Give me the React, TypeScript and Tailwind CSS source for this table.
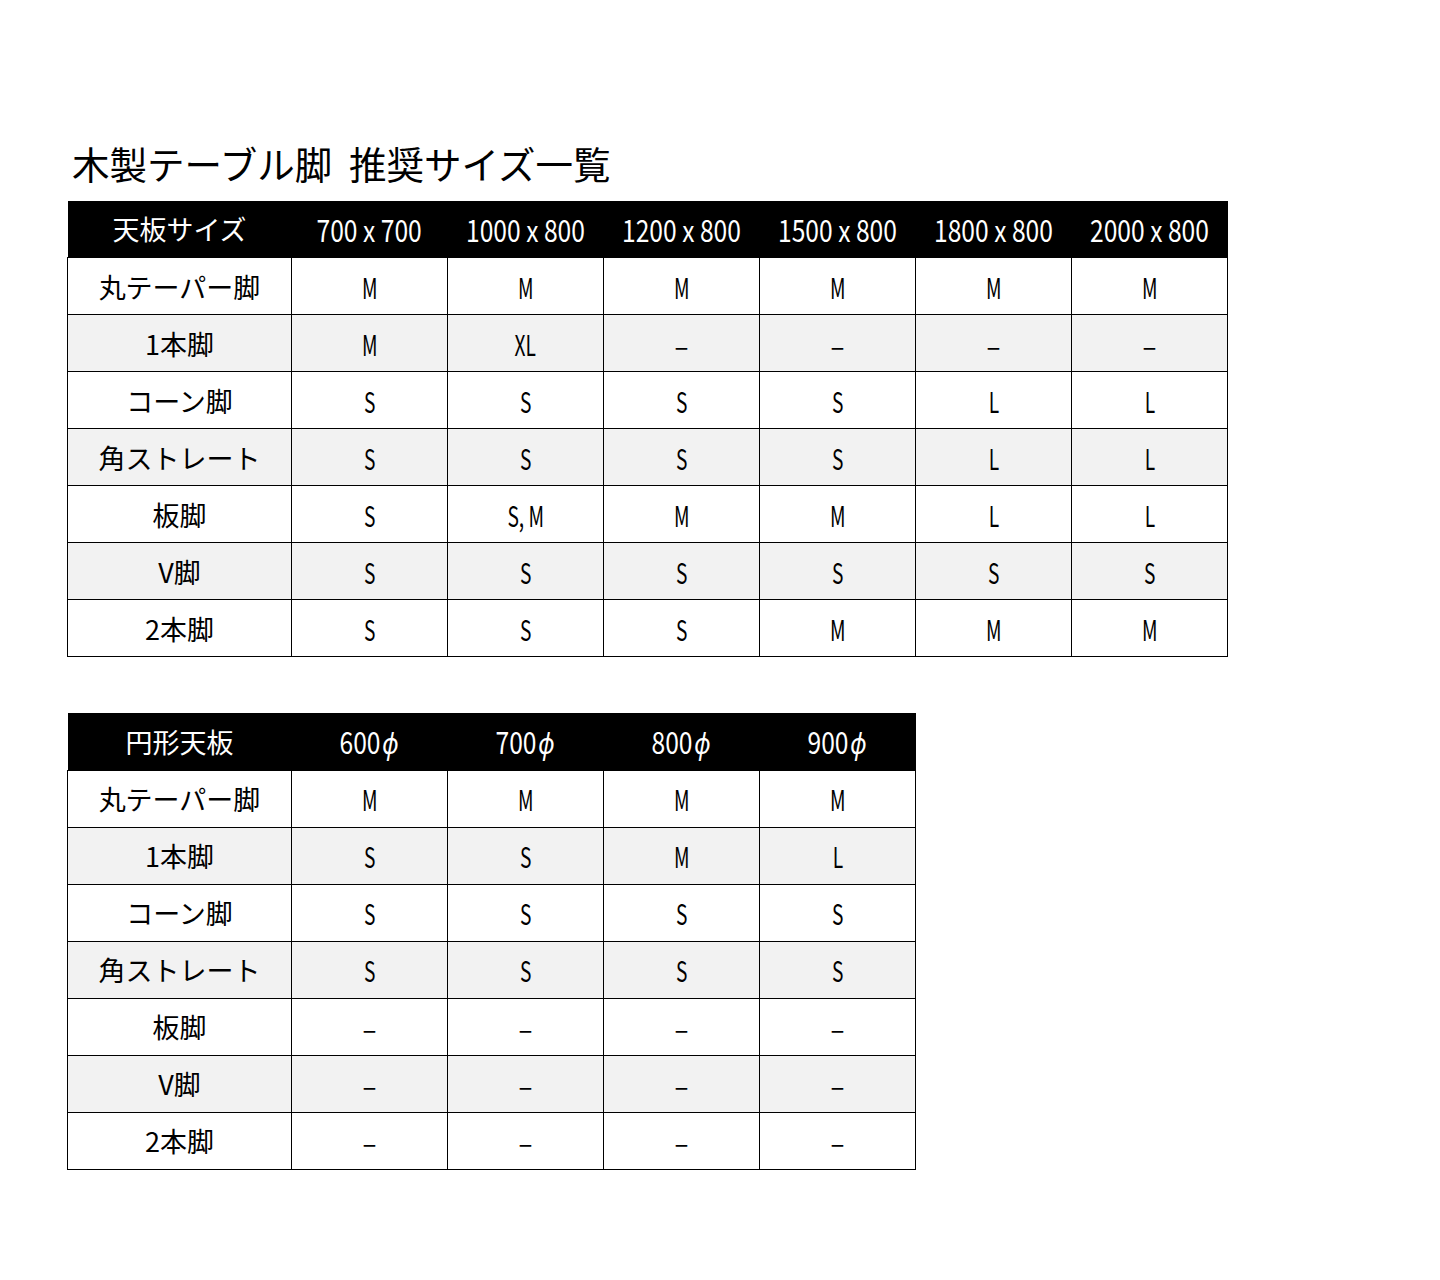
import React from 'react';

const font = {
  fontFamily: '"Noto Sans CJK JP", "Noto Sans", sans-serif',
};

const rectHeaders = ['700 x 700', '1000 x 800', '1200 x 800', '1500 x 800', '1800 x 800', '2000 x 800'];
const rectRows: [string, string[]][] = [
  ['丸テーパー脚', ['M', 'M', 'M', 'M', 'M', 'M']],
  ['1本脚', ['M', 'XL', '–', '–', '–', '–']],
  ['コーン脚', ['S', 'S', 'S', 'S', 'L', 'L']],
  ['角ストレート', ['S', 'S', 'S', 'S', 'L', 'L']],
  ['板脚', ['S', 'S, M', 'M', 'M', 'L', 'L']],
  ['V脚', ['S', 'S', 'S', 'S', 'S', 'S']],
  ['2本脚', ['S', 'S', 'S', 'M', 'M', 'M']],
];

const roundHeaders = ['600', '700', '800', '900'];
const roundRows: [string, string[]][] = [
  ['丸テーパー脚', ['M', 'M', 'M', 'M']],
  ['1本脚', ['S', 'S', 'M', 'L']],
  ['コーン脚', ['S', 'S', 'S', 'S']],
  ['角ストレート', ['S', 'S', 'S', 'S']],
  ['板脚', ['–', '–', '–', '–']],
  ['V脚', ['–', '–', '–', '–']],
  ['2本脚', ['–', '–', '–', '–']],
];

// narrow latin glyphs, the source uses a condensed face
const Narrow = ({ children, body }: { children: React.ReactNode; body?: boolean }) => (
  <span
    className={
      body
        ? 'inline-block text-[29px] leading-none scale-x-[0.66]'
        : 'inline-block text-[30px] leading-none scale-x-[0.82]'
    }
  >
    {children}
  </span>
);

const Value = ({ v }: { v: string }) =>
  v === '–' ? (
    <span className="inline-block text-[26px] leading-none relative top-[1px]">–</span>
  ) : (
    <Narrow body>{v}</Narrow>
  );

const SizeTable = ({
  title,
  headers,
  rows,
  round,
}: {
  title: string;
  headers: string[];
  rows: [string, string[]][];
  round?: boolean;
}) => (
  <table className="border-collapse text-[27px] leading-none" style={font}>
    <thead>
      <tr className="bg-black text-white h-[57px]">
        <th className="w-[224px] font-normal p-0">{title}</th>
        {headers.map((h) => (
          <th key={h} className="w-[156px] font-normal p-0">
            <Narrow>
              {h}
              {round && <span className="italic ml-[2px]">ϕ</span>}
            </Narrow>
          </th>
        ))}
      </tr>
    </thead>
    <tbody>
      {rows.map(([name, vals], i) => (
        <tr key={name} className={`h-[57px] ${i % 2 === 1 ? 'bg-[#f2f2f2]' : 'bg-white'}`}>
          <td className="border border-black text-center p-0">{name}</td>
          {vals.map((v, j) => (
            <td key={j} className="border border-black text-center p-0">
              <Value v={v} />
            </td>
          ))}
        </tr>
      ))}
    </tbody>
  </table>
);

export default function App() {
  return (
    <div className="min-h-[1280px] bg-white text-black pl-[67px] pt-[144px]">
      <h1 className="text-[37.5px] leading-none pl-[5px] mb-[19px]" style={font}>
        木製テーブル脚&nbsp;&nbsp;推奨サイズ一覧
      </h1>
      <SizeTable title="天板サイズ" headers={rectHeaders} rows={rectRows} />
      <div className="h-[56px]" />
      <SizeTable title="円形天板" headers={roundHeaders} rows={roundRows} round />
    </div>
  );
}
